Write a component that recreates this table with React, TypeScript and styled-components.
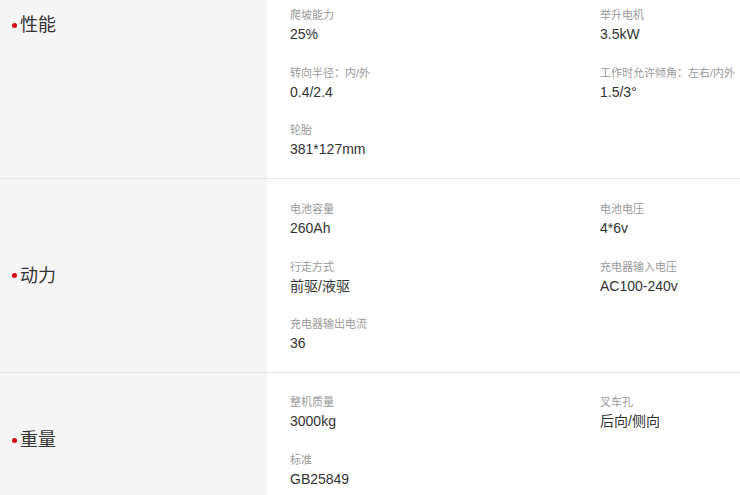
import styled, { createGlobalStyle } from 'styled-components';

const GlobalStyle = createGlobalStyle`
  html, body {
    margin: 0;
    padding: 0;
    background: #fff;
    font-family: "Liberation Sans", "Noto Sans CJK SC", sans-serif;
    overflow: hidden;
  }
`;

type Spec = { name: string; value: string };

type Section = {
  title: string;
  specs: Spec[];
  padTop: number;
  alignTop?: boolean;
};

const sections: Section[] = [
  {
    title: '性能',
    padTop: 7,
    alignTop: true,
    specs: [
      { name: '爬坡能力', value: '25%' },
      { name: '举升电机', value: '3.5kW' },
      { name: '转向半径：内/外', value: '0.4/2.4' },
      { name: '工作时允许倾角：左右/内外', value: '1.5/3°' },
      { name: '轮胎', value: '381*127mm' },
    ],
  },
  {
    title: '动力',
    padTop: 22,
    specs: [
      { name: '电池容量', value: '260Ah' },
      { name: '电池电压', value: '4*6v' },
      { name: '行走方式', value: '前驱/液驱' },
      { name: '充电器输入电压', value: 'AC100-240v' },
      { name: '充电器输出电流', value: '36' },
    ],
  },
  {
    title: '重量',
    padTop: 21,
    specs: [
      { name: '整机质量', value: '3000kg' },
      { name: '叉车孔', value: '后向/侧向' },
      { name: '标准', value: 'GB25849' },
    ],
  },
];

const Table = styled.div`
  width: 740px;
  display: flex;
  flex-direction: column;
`;

const Row = styled.section`
  display: flex;
  border-bottom: 1px solid #e6e6e6;
`;

const Heading = styled.div<{ $alignTop?: boolean }>`
  width: 267px;
  flex-shrink: 0;
  background: #f5f5f5;
  display: flex;
  align-items: ${({ $alignTop }) => ($alignTop ? 'flex-start' : 'center')};
  padding: ${({ $alignTop }) => ($alignTop ? '13px 0 0 12px' : '0 0 0 12px')};
  box-sizing: border-box;
`;

const TitleLine = styled.div`
  display: flex;
  align-items: center;
`;

const Dot = styled.span`
  width: 5px;
  height: 5px;
  border-radius: 50%;
  background: #d7000f;
  margin-right: 3px;
`;

const Title = styled.h3`
  margin: 0;
  font-size: 18px;
  line-height: 24px;
  font-weight: normal;
  color: #333;
`;

const Specs = styled.div<{ $padTop: number }>`
  flex: 1;
  display: grid;
  grid-template-columns: 310px 1fr;
  row-gap: 20.5px;
  padding: ${({ $padTop }) => $padTop}px 0 19px 23px;
`;

const Item = styled.div`
  display: flex;
  flex-direction: column;
  white-space: nowrap;
`;

const Name = styled.span`
  font-size: 11px;
  line-height: 17px;
  color: #999;
`;

const Value = styled.span`
  font-size: 14px;
  line-height: 20px;
  color: #333;
`;

export default function App() {
  return (
    <>
      <GlobalStyle />
      <Table>
        {sections.map((section) => (
          <Row key={section.title}>
            <Heading $alignTop={section.alignTop}>
              <TitleLine>
                <Dot />
                <Title>{section.title}</Title>
              </TitleLine>
            </Heading>
            <Specs $padTop={section.padTop}>
              {section.specs.map((spec) => (
                <Item key={spec.name}>
                  <Name>{spec.name}</Name>
                  <Value>{spec.value}</Value>
                </Item>
              ))}
            </Specs>
          </Row>
        ))}
      </Table>
    </>
  );
}
